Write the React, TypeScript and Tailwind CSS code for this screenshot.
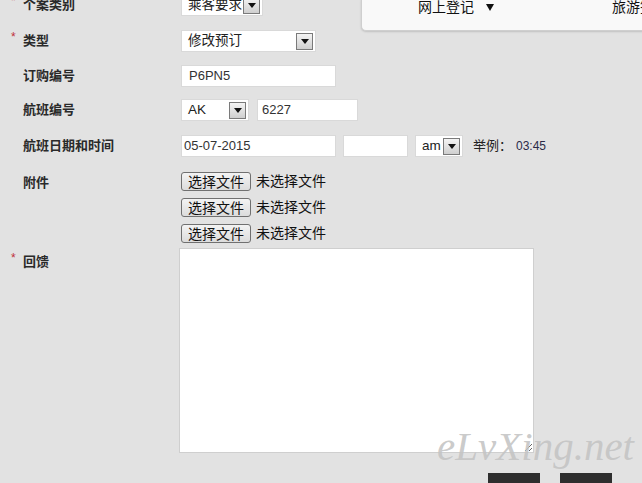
import React from 'react';

const cn = '"Liberation Sans", "Noto Sans CJK SC", sans-serif';

function Arrow() {
  return (
    <span className="flex h-[17px] w-[17px] shrink-0 items-center justify-center border border-[#7a7a7a] bg-gradient-to-b from-[#f4f4f4] to-[#cfcfcf]">
      <svg viewBox="0 0 8 5" className="h-[5px] w-[8px]" fill="#111">
        <path d="M0 0h8L4 5z" />
      </svg>
    </span>
  );
}

function Select({ value, w }: { value: string; w: string }) {
  return (
    <div className={`flex h-[22px] ${w} items-center justify-between whitespace-nowrap border border-[#d9d9d9] bg-white pl-[6px] pr-[2px] text-[13.5px] text-[#222]`}>
      <span>{value}</span>
      <Arrow />
    </div>
  );
}

function Input({ value = '', w, pl = 'pl-[7px]' }: { value?: string; w: string; pl?: string }) {
  return (
    <div className={`flex h-[22px] ${w} items-center border border-[#d9d9d9] bg-white ${pl} text-[13px] text-[#333]`}>
      {value}
    </div>
  );
}

function Label({ text, req = false }: { text: string; req?: boolean }) {
  return (
    <div className="flex w-[181px] shrink-0 items-center pl-[11px]">
      <span className="w-[12px] self-start text-[12px] leading-[12px] text-[#c0303a]">{req ? '*' : ''}</span>
      <span className="text-[13px] font-bold text-[#2a2a2a]">{text}</span>
    </div>
  );
}

function FileRow() {
  return (
    <div className="flex h-[19px] items-center gap-[5px]">
      <button className="flex h-[19px] w-[70px] items-center justify-center rounded-[3px] border border-[#707070] bg-gradient-to-b from-[#f3f3f3] to-[#dcdcdc] text-[14px] leading-none text-[#111]">
        选择文件
      </button>
      <span className="text-[14px] text-[#111]">未选择文件</span>
    </div>
  );
}

export default function App() {
  return (
    <div className="relative h-[483px] w-[642px] overflow-hidden bg-[#e2e2e2]" style={{ fontFamily: cn }}>
      <div className="-mt-[6px] flex flex-col">
        <div className="flex h-[22px] items-center">
          <Label text="个案类别" req />
          <Select value="乘客要求" w="w-[82px]" />
        </div>
        <div className="mt-[14px] flex h-[22px] items-center">
          <Label text="类型" req />
          <Select value="修改预订" w="w-[135px]" />
        </div>
        <div className="mt-[13px] flex h-[22px] items-center">
          <Label text="订购编号" />
          <Input value="P6PN5" w="w-[155px]" />
        </div>
        <div className="mt-[12px] flex h-[22px] items-center">
          <Label text="航班编号" />
          <Select value="AK" w="w-[68px]" />
          <div className="ml-[8px]">
            <Input value="6227" w="w-[101px]" pl="pl-[4px]" />
          </div>
        </div>
        <div className="mt-[14px] flex h-[22px] items-center">
          <Label text="航班日期和时间" />
          <Input value="05-07-2015" w="w-[155px]" pl="pl-[2px]" />
          <div className="ml-[7px]">
            <Input w="w-[65px]" />
          </div>
          <div className="ml-[7px]">
            <Select value="am" w="w-[48px]" />
          </div>
          <span className="ml-[10px] text-[13px] text-[#222]">举例：</span>
          <span className="ml-[4px] text-[12px] text-[#2a2a48]">03:45</span>
        </div>
        <div className="mt-[15px] flex">
          <div className="mt-[1px] flex h-[19px] items-center">
            <Label text="附件" />
          </div>
          <div className="flex flex-col gap-[7px]">
            <FileRow />
            <FileRow />
            <FileRow />
          </div>
        </div>
        <div className="mt-[5px] flex">
          <div className="mt-[6px] flex h-[16px] items-center">
            <Label text="回馈" req />
          </div>
          <textarea className="-ml-[2px] h-[205px] w-[355px] border border-[#cfcfcf] bg-white outline-none" />
        </div>
      </div>

      <div className="absolute left-[488px] top-[473px] h-[12px] w-[52px] bg-[#2e2e2e]" />
      <div className="absolute left-[560px] top-[473px] h-[12px] w-[52px] bg-[#2e2e2e]" />

      <div
        className="pointer-events-none absolute left-[437px] top-[416px] text-[41px] italic text-[#c4c4c4]/90"
        style={{ fontFamily: '"Liberation Serif", serif' }}
      >
        eLvXing.net
      </div>

      <div className="absolute -top-[1px] left-[361px] h-[32px] w-[300px] rounded-bl-[5px] border-b border-l border-[#cfcfcf] bg-[#f9f9f9] shadow-[0_1px_2px_rgba(0,0,0,0.15)]">
        <div className="absolute left-[56px] -top-[2px] flex items-center gap-[12px] text-[14px] text-[#111]">
          <span>网上登记</span>
          <svg viewBox="0 0 8 7" className="h-[7px] w-[8px]" fill="#111">
            <path d="M0 0h8L4 7z" />
          </svg>
        </div>
        <span className="absolute left-[250px] -top-[2px] whitespace-nowrap text-[14px] text-[#111]">旅游签证</span>
      </div>
    </div>
  );
}
